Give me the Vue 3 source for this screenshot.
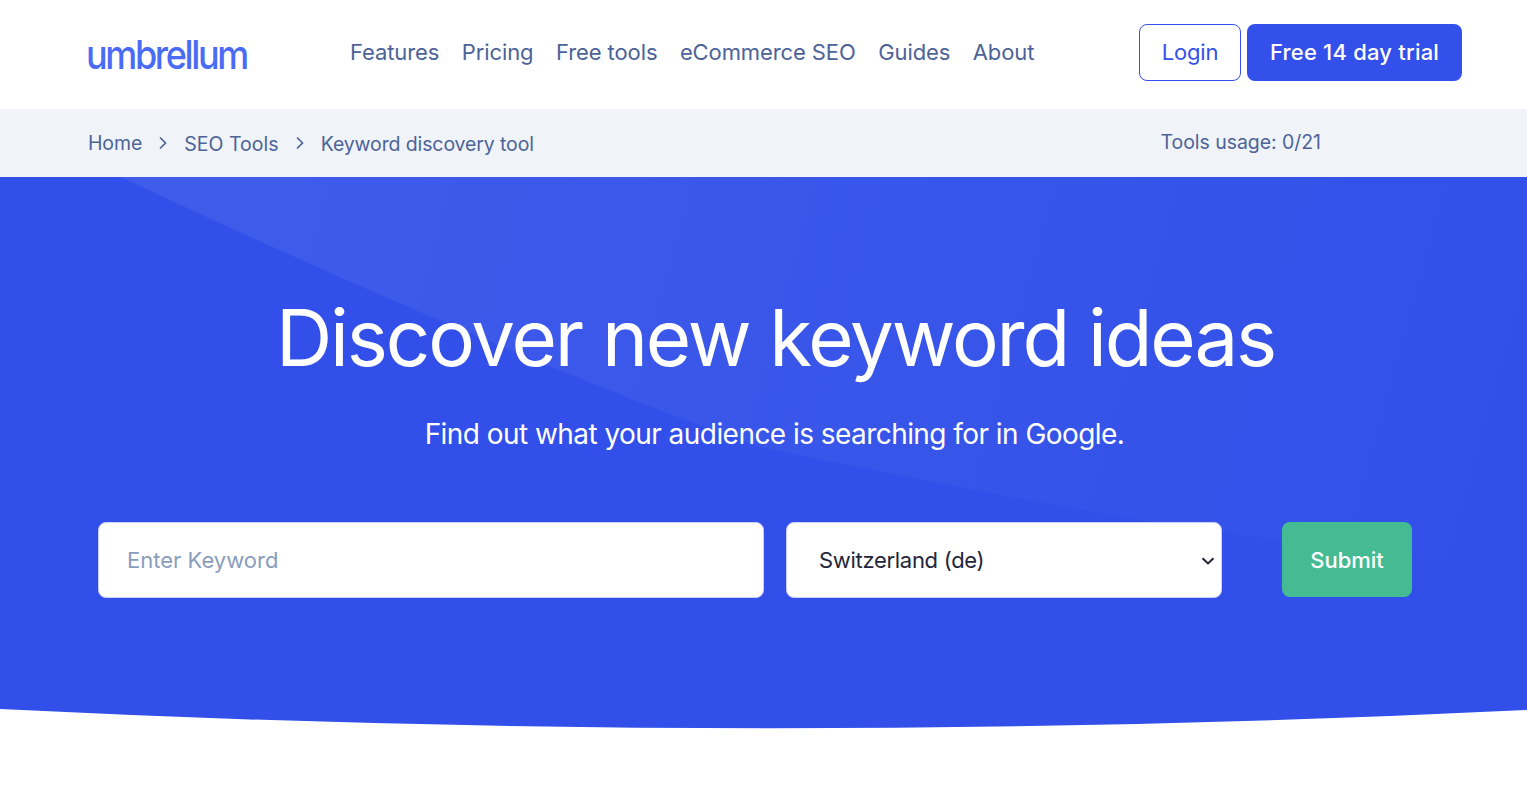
<script setup>
const nav = ['Features', 'Pricing', 'Free tools', 'eCommerce SEO', 'Guides', 'About']
</script>

<template>
  <div class="page">
    <header class="top">
      <div class="brand"><a class="logo">umbrellum</a></div>
      <nav class="nav">
        <a v-for="n in nav" :key="n">{{ n }}</a>
      </nav>
      <div class="actions">
        <a class="btn login">Login</a>
        <a class="btn trial">Free 14 day trial</a>
      </div>
    </header>
    <div class="crumbs">
      <div class="trail">
        <span>Home</span>
        <svg class="chev" width="10" height="14" viewBox="0 0 10 14"><path d="M2 1.5l5.5 5.5L2 12.5" fill="none" stroke="#4d6398" stroke-width="1.7"/></svg>
        <span class="low mid">SEO Tools</span>
        <svg class="chev" width="10" height="14" viewBox="0 0 10 14"><path d="M2 1.5l5.5 5.5L2 12.5" fill="none" stroke="#4d6398" stroke-width="1.7"/></svg>
        <span class="low">Keyword discovery tool</span>
      </div>
      <div class="usage">Tools usage: 0/21</div>
    </div>
    <section class="hero">
      <svg class="deco" viewBox="0 0 1527 552" preserveAspectRatio="none">
        <defs>
          <linearGradient id="sheen" gradientUnits="userSpaceOnUse" x1="120" y1="0" x2="1500" y2="380">
            <stop offset="0" stop-color="#fff" stop-opacity="0.07"/>
            <stop offset="1" stop-color="#fff" stop-opacity="0"/>
          </linearGradient>
        </defs>
        <path d="M121 0H1527V385C1300 375 1102 340 760 270C700 250 451 156 121 0Z" fill="url(#sheen)"/>
      </svg>
      <h1>Discover new keyword ideas</h1>
      <p class="sub">Find out what your audience is searching for in Google.</p>
      <form class="search" @submit.prevent>
        <input class="field kw" placeholder="Enter Keyword" />
        <div class="select-wrap">
          <select class="field country">
            <option>Switzerland (de)</option>
          </select>
          <svg class="caret" width="14" height="8" viewBox="0 0 14 8"><path d="M1.5 1.2L7 6.4l5.5-5.2" fill="none" stroke="#1f2233" stroke-width="2"/></svg>
        </div>
        <button class="submit">Submit</button>
      </form>
      <svg class="curve" viewBox="0 0 1527 20" preserveAspectRatio="none">
        <path d="M0 0Q763.5 38 1527 1V21H0Z" fill="#fff"/>
      </svg>
    </section>
  </div>
</template>

<style>
html, body { background: #fff; overflow: hidden; }
</style>

<style scoped>
.page { width: 1527px; height: 795px; font-family: Inter, "Noto Sans", sans-serif; color: #4d6398; }
.top { height: 109px; box-sizing: border-box; display: flex; align-items: center; padding: 0 65px 0 86px; }
.brand { width: 264px; margin-top: 1px; }
.logo { display: inline-block; font-size: 40px; line-height: 1; font-weight: 500; letter-spacing: -2.6px; color: #4a6cf5; transform: scaleX(0.9); transform-origin: left center; }
.nav { display: flex; gap: 22.5px; font-size: 22px; letter-spacing: -0.1px; margin-top: -5px; }
.actions { margin-left: auto; display: flex; gap: 6px; margin-top: -4px; }
.btn { height: 57px; box-sizing: border-box; padding-bottom: 2px; display: flex; align-items: center; justify-content: center; border-radius: 8px; font-size: 22px; }
.login { width: 102px; border: 1px solid #3350ea; color: #3350ea; letter-spacing: -0.2px; }
.trial { width: 215px; background: #3350ea; color: #fff; font-weight: 500; letter-spacing: 0.2px; }
.crumbs { height: 68px; background: #f0f3f8; display: flex; align-items: center; padding: 0 206px 0 88px; justify-content: space-between; font-size: 19.5px; letter-spacing: -0.12px; }
.trail { display: flex; align-items: center; gap: 16px; }
.low { margin-top: 2px; }
.mid { letter-spacing: 0.05px; }
.usage { margin-top: -2px; letter-spacing: -0.05px; }
.chev { margin-top: -1px; }
.hero { position: relative; height: 552px; background: #3250e9; overflow: hidden; box-sizing: border-box; padding-top: 114px; text-align: center; color: #fff; }
.deco { position: absolute; inset: 0; width: 100%; height: 100%; }
.curve { position: absolute; left: 0; bottom: 0; width: 100%; height: 20px; display: block; }
h1 { position: relative; margin: 0; padding-left: 24px; font-size: 78px; font-weight: 400; line-height: 94px; letter-spacing: -2.14px; }
.sub { position: relative; margin: 29px 0 0; padding-left: 22px; font-size: 28px; line-height: 40px; letter-spacing: -0.55px; }
.search { position: relative; display: flex; align-items: flex-start; margin: 68px 115px 0 98px; }
.field { height: 76px; box-sizing: border-box; background: #fff; border: 1px solid #c6cff8; border-radius: 8px; font-family: inherit; font-size: 22px; outline: none; }
.kw { width: 666px; padding: 0 28px; color: #1f2233; }
.kw::placeholder { color: #8a9dbd; opacity: 1; }
.select-wrap { position: relative; width: 436px; margin-left: 22px; }
.country { width: 100%; padding: 0 32px; color: #23263a; letter-spacing: -0.3px; appearance: none; }
.caret { position: absolute; right: 7px; top: 35px; pointer-events: none; }
.submit { width: 130px; height: 75px; margin-left: 60px; border: 0; border-radius: 8px; background: #45bb94; color: #fff; font-family: inherit; font-size: 22px; font-weight: 500; }
</style>
